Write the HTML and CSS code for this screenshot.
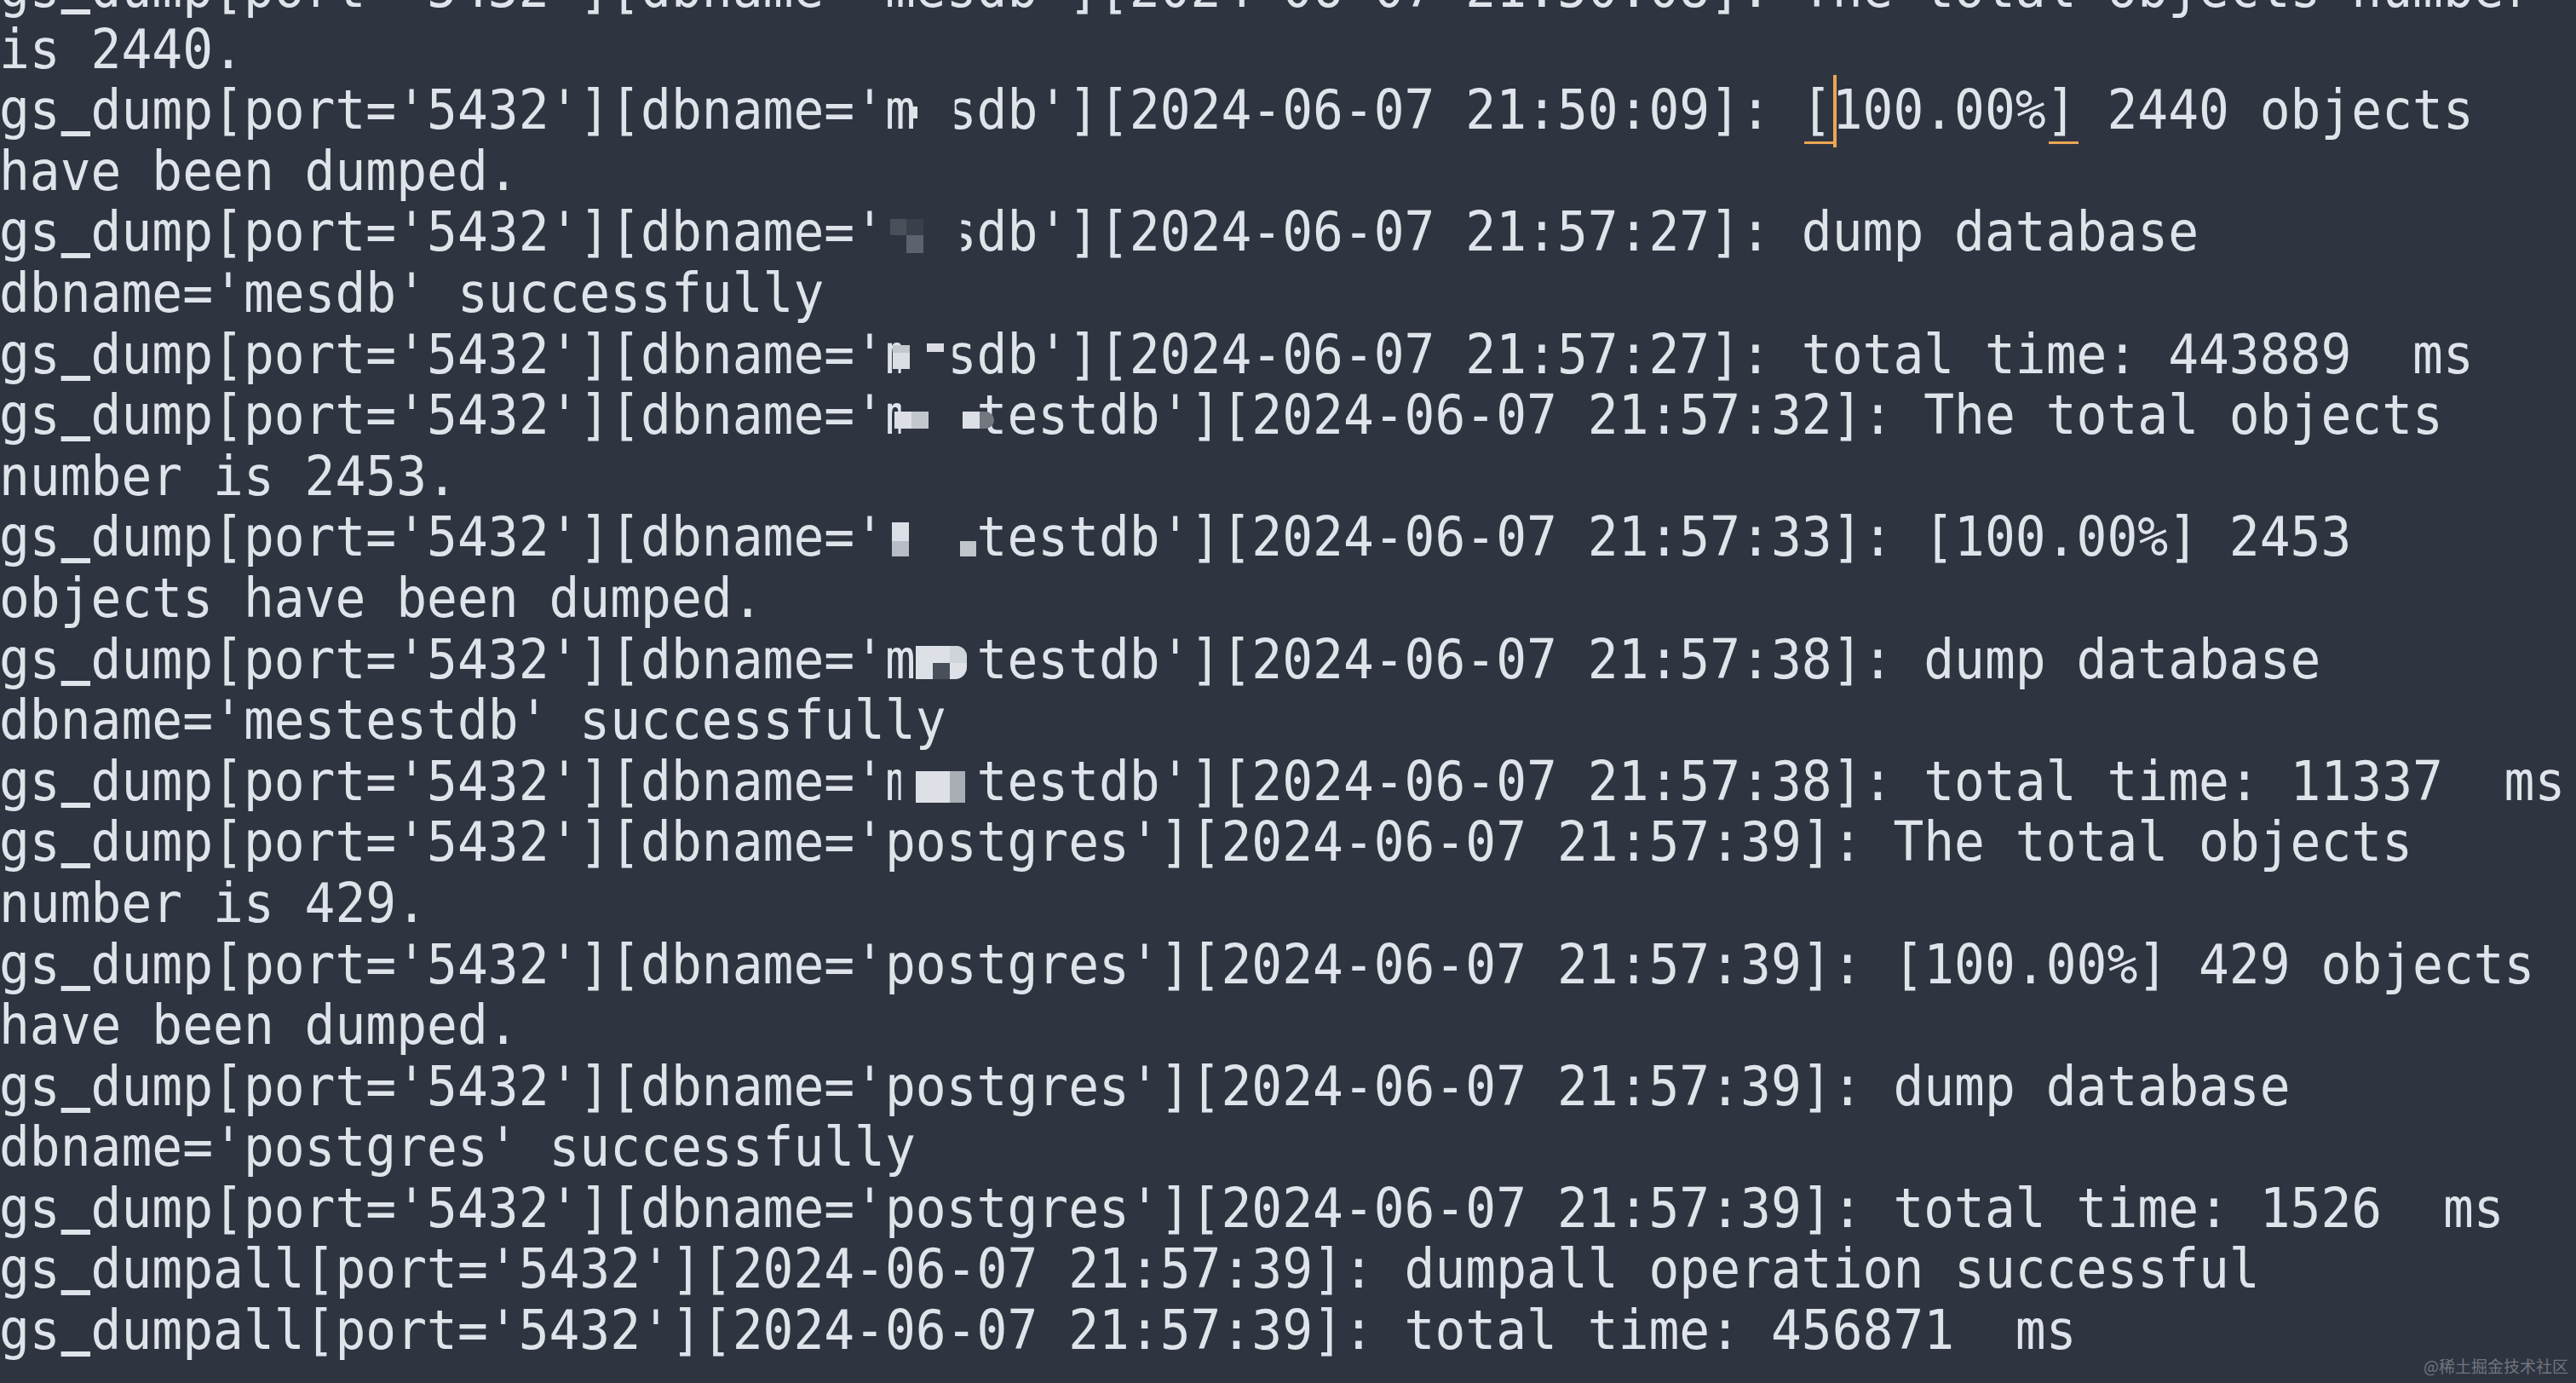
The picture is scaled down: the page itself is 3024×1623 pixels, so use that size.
FILE: index.html
```html
<!DOCTYPE html>
<html lang="en">
<head>
<meta charset="utf-8">
<title>gs_dumpall output</title>
<link rel="stylesheet" href="styles.css">
</head>
<body>
<main class="screen">
<pre class="term"><div class="ln">gs<span class="us">_</span>dump[port='5432'][dbname='mesdb'][2024-06-07 21:50:08]: The total objects number</div><div class="ln">is 2440.</div><div class="ln">gs<span class="us">_</span>dump[port='5432'][dbname='m<span class="h">e</span><span class="cr3">s</span>db'][2024-06-07 21:50:09]: [100.00%] 2440 objects</div><div class="ln">have been dumped.</div><div class="ln">gs<span class="us">_</span>dump[port='5432'][dbname='<span class="h">me</span><span class="cr5">s</span>db'][2024-06-07 21:57:27]: dump database</div><div class="ln">dbname='mesdb' successfully</div><div class="ln">gs<span class="us">_</span>dump[port='5432'][dbname='<span class="cl5">m</span><span class="h">e</span><span class="cr2">s</span>db'][2024-06-07 21:57:27]: total time: 443889  ms</div><div class="ln">gs<span class="us">_</span>dump[port='5432'][dbname='<span class="cl5">m</span><span class="h">es</span>testdb'][2024-06-07 21:57:32]: The total objects</div><div class="ln">number is 2453.</div><div class="ln">gs<span class="us">_</span>dump[port='5432'][dbname='<span class="h">mes</span>testdb'][2024-06-07 21:57:33]: [100.00%] 2453</div><div class="ln">objects have been dumped.</div><div class="ln">gs<span class="us">_</span>dump[port='5432'][dbname='m<span class="h">es</span>testdb'][2024-06-07 21:57:38]: dump database</div><div class="ln">dbname='mestestdb' successfully</div><div class="ln">gs<span class="us">_</span>dump[port='5432'][dbname='<span class="cl5">m</span><span class="h">es</span>testdb'][2024-06-07 21:57:38]: total time: 11337  ms</div><div class="ln">gs<span class="us">_</span>dump[port='5432'][dbname='postgres'][2024-06-07 21:57:39]: The total objects</div><div class="ln">number is 429.</div><div class="ln">gs<span class="us">_</span>dump[port='5432'][dbname='postgres'][2024-06-07 21:57:39]: [100.00%] 429 objects</div><div class="ln">have been dumped.</div><div class="ln">gs<span class="us">_</span>dump[port='5432'][dbname='postgres'][2024-06-07 21:57:39]: dump database</div><div class="ln">dbname='postgres' successfully</div><div class="ln">gs<span class="us">_</span>dump[port='5432'][dbname='postgres'][2024-06-07 21:57:39]: total time: 1526  ms</div><div class="ln">gs<span class="us">_</span>dumpall[port='5432'][2024-06-07 21:57:39]: dumpall operation successful</div><div class="ln">gs<span class="us">_</span>dumpall[port='5432'][2024-06-07 21:57:39]: total time: 456871  ms</div></pre>
<div class="mosaic">
  <i class="b b2a"></i>
  <i class="b b4a"></i><i class="b b4b"></i><i class="b b4c"></i>
  <i class="b b6a"></i><i class="b b6b"></i><i class="b b6c"></i>
  <i class="b b7a"></i><i class="b b7b"></i><i class="b b7c"></i><i class="b b7d"></i>
  <i class="b b9a"></i><i class="b b9b"></i><i class="b b9c"></i>
  <i class="b b11a"></i><i class="b b11b"></i><i class="b b11c"></i>
  <i class="b b13a"></i><i class="b b13b"></i>
</div>
<div class="sel">
  <i class="ul ul-left"></i>
  <i class="caret"></i>
  <i class="ul ul-right"></i>
</div>
<div class="watermark">@稀土掘金技术社区</div>
</main>
</body>
</html>
```

FILE: styles.css
```css
html, body {
  margin: 0;
  padding: 0;
  background: #2f3540;
  overflow: hidden;
}

.screen {
  position: relative;
  width: 3024px;
  height: 1623px;
  overflow: hidden;
  background: #2f3540;
}

.term {
  margin: -49px 0 0 -1px;
  padding: 0;
  font-family: "DejaVu Sans Mono", "Liberation Mono", monospace;
  font-size: 64px;
  line-height: 71.6px;
  color: #dfe3ea;
  white-space: pre;
  transform: scaleX(0.9307);
  transform-origin: 0 0;
}

.ln {
  height: 71.6px;
}

/* the reference font draws a thicker underscore close to the baseline */
.us {
  color: transparent;
  background-image: linear-gradient(#dfe3ea, #dfe3ea);
  background-repeat: no-repeat;
  background-size: 96% 6px;
  background-position: 50% 62px;
}

.h {
  color: transparent;
}

.cl5 {
  display: inline-block;
  clip-path: inset(0 48% 0 0);
}

.cr2 {
  display: inline-block;
  clip-path: inset(0 0 0 22%);
}

.cr3 {
  display: inline-block;
  clip-path: inset(0 0 0 28%);
}

.cr5 {
  display: inline-block;
  clip-path: inset(0 0 0 50%);
}

/* pixelated mosaic patches over hidden names */
.mosaic {
  position: absolute;
  left: 0;
  top: 0;
  width: 100%;
  height: 100%;
  pointer-events: none;
}

.b {
  position: absolute;
  display: block;
}

.b2a { left: 1071px; top: 125px; width: 6px; height: 14px; background: #dfe3ea; }

.b4a { left: 1045px; top: 257px; width: 19px; height: 19px; background: #4a5059; }
.b4b { left: 1064px; top: 257px; width: 20px; height: 19px; background: #3a4049; }
.b4c { left: 1064px; top: 276px; width: 20px; height: 21px; background: #5d636c; }

.b6a { left: 1048px; top: 405px; width: 20px; height: 28px; background: #dadde4; }
.b6b { left: 1048px; top: 405px; width: 20px; height: 9px; background: #c3c7ce; }
.b6c { left: 1088px; top: 403px; width: 20px; height: 10px; background: #dadde4; }

.b7a { left: 1050px; top: 483px; width: 20px; height: 20px; background: #dcdfe6; }
.b7b { left: 1070px; top: 483px; width: 20px; height: 20px; background: #c2c6cd; }
.b7c { left: 1130px; top: 483px; width: 20px; height: 20px; background: #dcdfe6; }
.b7d { left: 1150px; top: 483px; width: 17px; height: 20px; background: #737880; border-radius: 0 10px 10px 0; }

.b9a { left: 1047px; top: 613px; width: 20px; height: 22px; background: #dcdfe6; }
.b9b { left: 1047px; top: 635px; width: 20px; height: 18px; background: #b8bcc4; }
.b9c { left: 1127px; top: 635px; width: 19px; height: 18px; background: #c0c4cb; }

.b11a { left: 1075px; top: 758px; width: 60px; height: 39px; background: #dde0e7; border-radius: 0 14px 14px 0; }
.b11b { left: 1095px; top: 778px; width: 20px; height: 19px; background: #4a5059; }
.b11c { left: 1115px; top: 758px; width: 20px; height: 20px; background: #cfd3da; border-radius: 0 12px 0 0; }

.b13a { left: 1075px; top: 905px; width: 40px; height: 37px; background: #dde0e7; }
.b13b { left: 1115px; top: 905px; width: 18px; height: 37px; background: #a9aeb6; }

/* selection markers around [100.00%] */
.sel {
  position: absolute;
  left: 0;
  top: 0;
  width: 100%;
  height: 100%;
  pointer-events: none;
}

.ul {
  position: absolute;
  display: block;
  top: 166px;
  width: 35px;
  height: 3px;
  background: #eaa654;
}

.ul-left { left: 2118px; }
.ul-right { left: 2405px; }

.caret {
  position: absolute;
  display: block;
  left: 2152px;
  top: 88px;
  width: 4px;
  height: 85px;
  background: #eaa654;
}

.watermark {
  position: absolute;
  right: 9px;
  bottom: 9px;
  font-family: "Noto Sans CJK SC", "Noto Sans", sans-serif;
  font-size: 19px;
  line-height: 22px;
  color: rgba(170, 176, 186, 0.55);
  letter-spacing: 0;
}
```
